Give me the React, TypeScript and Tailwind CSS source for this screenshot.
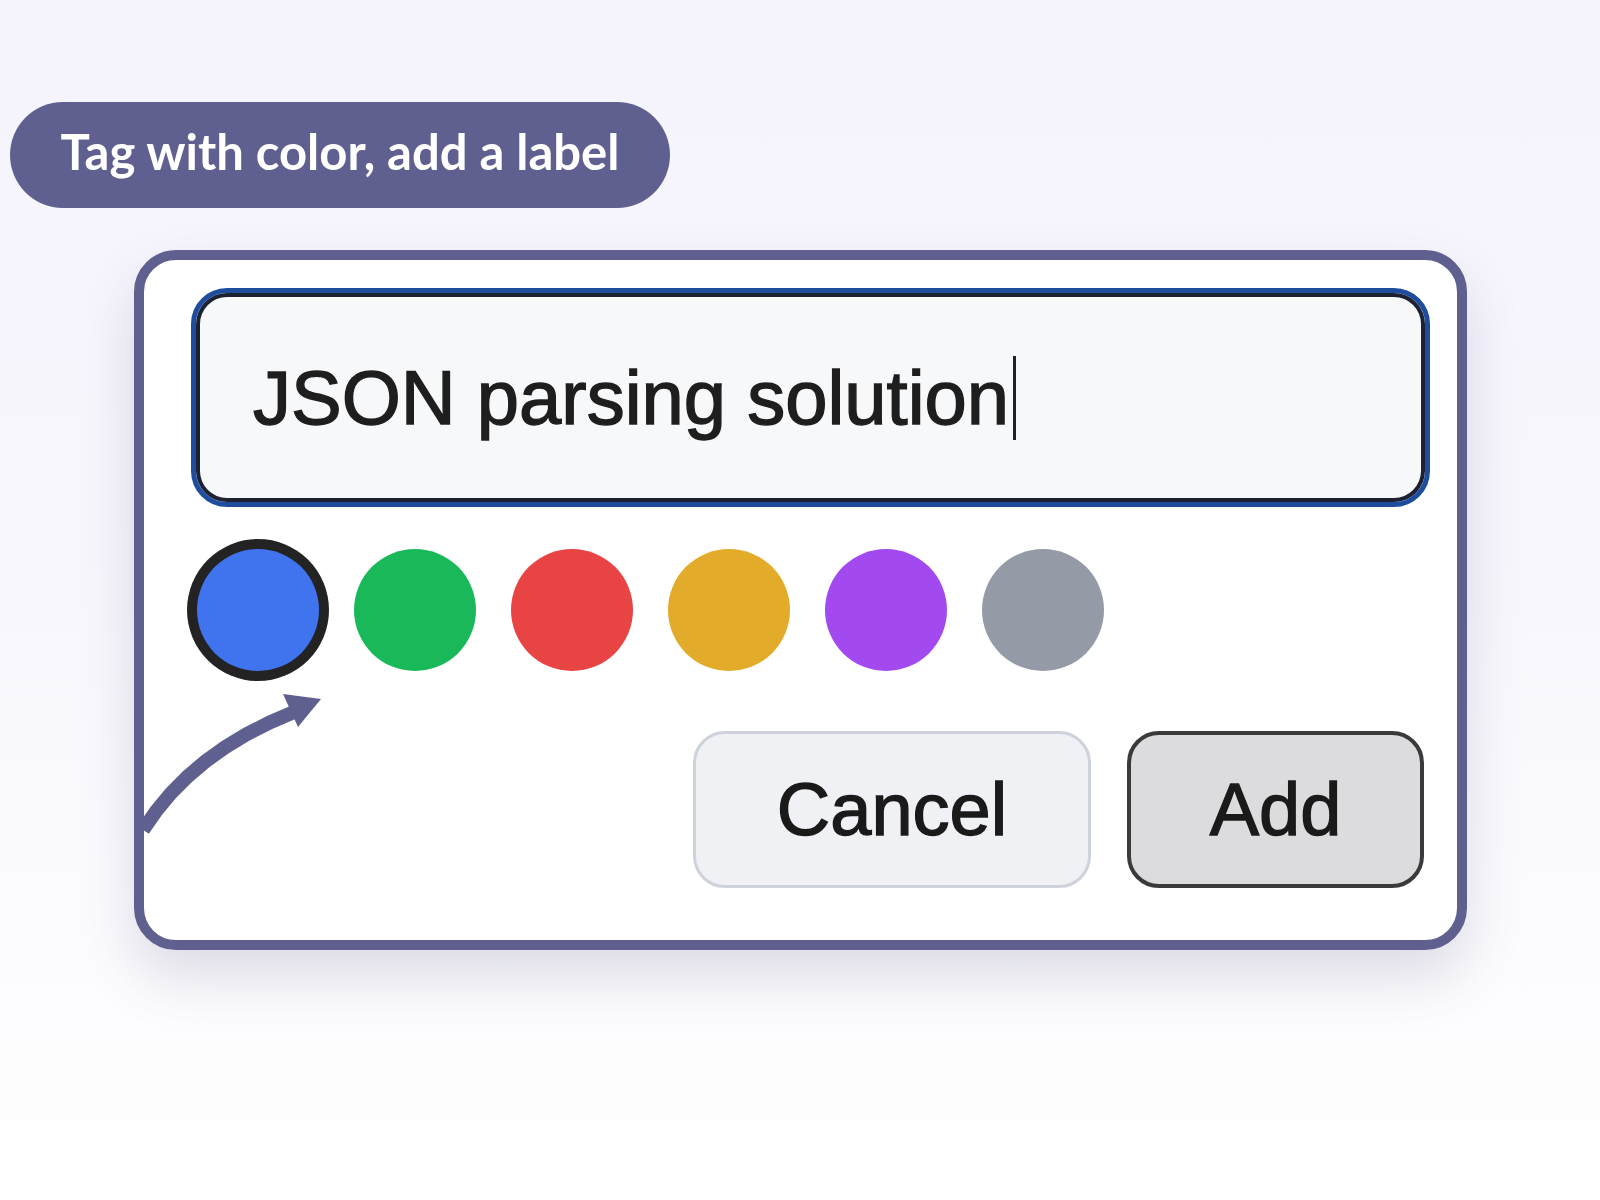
import React from "react";

const swatches = [
  { color: "bg-[#4074ee]", selected: true },
  { color: "bg-[#19b95a]", selected: false },
  { color: "bg-[#e94444]", selected: false },
  { color: "bg-[#e3ab2a]", selected: false },
  { color: "bg-[#a249f0]", selected: false },
  { color: "bg-[#959aa7]", selected: false },
];

const App = () => {
  return (
    <div className="min-h-screen w-full bg-linear-to-b from-[#f5f4fd] via-[#f8f7fd] to-white pt-[102px] overflow-hidden">
      <div className="ml-[10px] w-[660px] h-[106px] rounded-full bg-[#5f608f] flex items-center justify-center">
        <p className="font-['Lato',sans-serif] font-bold text-[49px] text-white leading-none pb-[8px]">
          Tag with color, add a label
        </p>
      </div>

      <div className="relative ml-[134px] mt-[42px] w-[1333px] bg-white border-[10px] border-[#5f608f] rounded-[42px] pt-[28px] pl-[47px] pr-[27px] pb-[52px] shadow-[0_28px_55px_rgba(80,80,120,0.18)]">
        <div className="h-[219px] rounded-[36px] bg-[#f7f8fa] border-[5px] border-[#1f4d9e] shadow-[inset_0_0_0_4px_#1c2232] flex items-center pl-[57px]">
          <span className="font-['Liberation_Sans',Arial,sans-serif] text-[76px] text-[#1e1e1e] leading-none [-webkit-text-stroke:1.4px_#1e1e1e]">
            JSON parsing solution
          </span>
          <span className="ml-[4px] w-[3px] h-[84px] bg-[#222]"></span>
        </div>

        <div className="flex gap-[35px] mt-[42px] ml-[6px]">
          {swatches.map((s, i) => (
            <div
              key={i}
              className={`w-[122px] h-[122px] rounded-full ${s.color} ${
                s.selected ? "ring-[10px] ring-[#232323]" : ""
              }`}
            ></div>
          ))}
        </div>

        <div className="flex justify-end gap-[36px] mt-[60px] mr-[6px]">
          <button className="w-[398px] h-[157px] rounded-[32px] bg-[#f0f1f5] border-[3px] border-[#cdd2db] font-['Liberation_Sans',Arial,sans-serif] text-[74px] text-[#1a1a1a] leading-none [-webkit-text-stroke:1.4px_#1a1a1a]">
            Cancel
          </button>
          <button className="w-[297px] h-[157px] rounded-[32px] bg-[#dcdbde] border-[4px] border-[#3a3a3a] font-['Liberation_Sans',Arial,sans-serif] text-[74px] text-[#1a1a1a] leading-none [-webkit-text-stroke:1.4px_#1a1a1a]">
            Add
          </button>
        </div>

        {/* curved pointer arrow toward the selected swatch */}
        <svg
          className="absolute left-[-2px] top-[430px]"
          width="190"
          height="150"
          viewBox="0 0 190 150"
        >
          <polygon
            fill="#5f608f"
            points="6.9,143.7 19.7,125.3 34,108.1 50,92 67.6,77 86.8,63.2 107.7,50.5 130.3,38.9 154.6,28.5 149.4,15.5 124.4,26.3 100.9,38.3 79.1,51.5 58.9,66 40.4,81.7 23.6,98.7 8.5,116.9 -4.9,136.3"
          />
          <polygon points="141,4 179,9 156,37" fill="#5f608f" />
        </svg>
      </div>
    </div>
  );
};

export default App;
